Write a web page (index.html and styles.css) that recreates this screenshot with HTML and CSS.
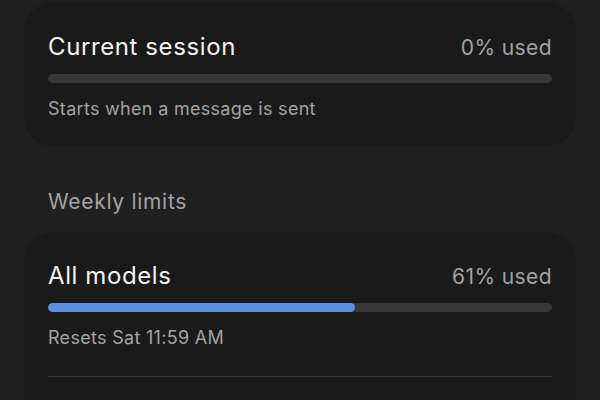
FILE: index.html
```html
<!DOCTYPE html>
<html lang="en">
<head>
    <meta charset="UTF-8">
    <meta name="viewport" content="width=device-width, initial-scale=1.0">
    <link rel="stylesheet" href="styles.css">
</head>
<body>
    <div class="usage-page">
        <div class="usage-card">
            <div class="usage-row">
                <span class="usage-title">Current session</span>
                <span class="usage-amount">0% used</span>
            </div>
            <div class="usage-track">
                <div class="usage-fill" style="width: 0%"></div>
            </div>
            <div class="usage-note">Starts when a message is sent</div>
        </div>

        <h3 class="section-label">Weekly limits</h3>

        <div class="usage-card usage-card-open">
            <div class="usage-row">
                <span class="usage-title">All models</span>
                <span class="usage-amount">61% used</span>
            </div>
            <div class="usage-track">
                <div class="usage-fill" style="width: 61%"></div>
            </div>
            <div class="usage-note">Resets Sat 11:59 AM</div>
            <div class="usage-divider"></div>
        </div>
    </div>
</body>
</html>
```

FILE: styles.css
```css
/* Base styles */
:root {
    --page-bg: #202020;
    --card-bg: #1a1a1a;
    --primary-text: #f2f2f2;
    --secondary-text: #a3a3a3;
    --track-bg: #383838;
    --fill-bg: #5b8fe0;
    --divider: #393939;
}

body {
    font-family: Inter, 'Noto Sans', sans-serif;
    margin: 0;
    background-color: var(--page-bg);
    color: var(--primary-text);
    overflow: hidden;
}

.usage-page {
    padding: 3px 24px 0;
}

/* Cards */
.usage-card {
    background-color: var(--card-bg);
    border-radius: 28px;
    padding: 30px 24px 26px;
}

.usage-card-open {
    padding-bottom: 60px;
}

.usage-row {
    display: flex;
    justify-content: space-between;
    align-items: baseline;
}

.usage-title {
    font-size: 24px;
    line-height: 28px;
    letter-spacing: 0.6px;
}

.usage-amount {
    font-size: 21px;
    line-height: 28px;
    letter-spacing: 0.4px;
    color: var(--secondary-text);
}

.usage-track {
    height: 9px;
    margin-top: 12px;
    border-radius: 5px;
    background-color: var(--track-bg);
    overflow: hidden;
}

.usage-fill {
    height: 100%;
    border-radius: 5px;
    background-color: var(--fill-bg);
}

.usage-note {
    margin-top: 15px;
    font-size: 18px;
    line-height: 22px;
    letter-spacing: 0.3px;
    color: var(--secondary-text);
}

.usage-divider {
    height: 1px;
    margin-top: 27px;
    background-color: var(--divider);
}

/* Section heading */
.section-label {
    margin: 43px 24px 17px;
    font-size: 21px;
    font-weight: 400;
    line-height: 26px;
    letter-spacing: 0.7px;
    color: var(--secondary-text);
}
```
